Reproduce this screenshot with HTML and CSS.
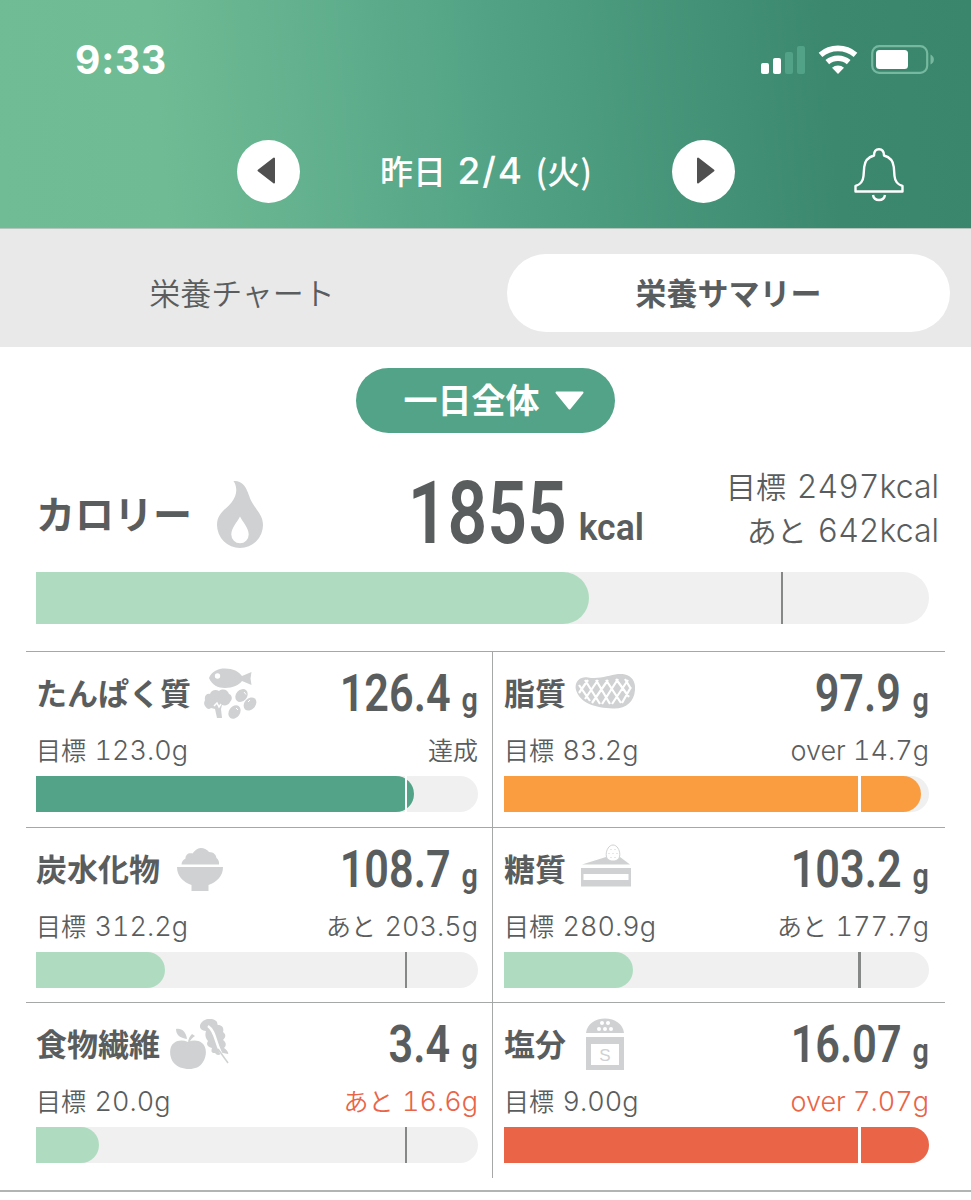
FILE: index.html
```html
<!DOCTYPE html>
<html lang="ja">
<head>
  <meta charset="UTF-8">
  <meta name="viewport" content="width=device-width, initial-scale=1">
  <title>栄養サマリー</title>
  <link rel="stylesheet" href="styles.css">
</head>
<body>
  <header>
    <div class="status">
      <span class="clock">9:33</span>
      <svg class="status-icons" width="174" height="30" viewBox="0 0 174 30" fill="#fff">
        <rect x="0" y="18" width="8" height="11" rx="2"/>
        <rect x="12" y="13" width="8" height="16" rx="2"/>
        <g fill="#52a287">
          <rect x="24" y="7" width="8" height="22" rx="2"/>
          <rect x="36" y="1" width="8" height="28" rx="2"/>
        </g>
        <g fill="none" stroke="#fff" stroke-width="5.600">
          <path d="M59.500 9.800a27 27 0 0 1 35 0"/>
          <path d="M66.300 17.200a16.500 16.500 0 0 1 21.400 0"/>
        </g>
        <path d="M77 29l-6-6.200a9 9 0 0 1 12 0z"/>
        <rect x="111.200" y="1.200" width="55" height="26.600" rx="7" fill="none" stroke="#77b8a0" stroke-width="2.200"/>
        <rect x="115" y="5" width="32" height="19" rx="3.500"/>
        <path d="M169.500 9.500c4.500 2 4.500 8 0 10z" fill="#77b8a0"/>
      </svg>
    </div>
    <div class="nav">
      <button class="circle" aria-label="前の日">
        <svg width="18" height="27" viewBox="0 0 18 27"><path d="M17 1.500v24L1.500 13.500z" fill="#505050" stroke="#505050" stroke-width="2" stroke-linejoin="round"/></svg>
      </button>
      <div class="date">昨日 <span>2/4</span> (火)</div>
      <button class="circle next" aria-label="次の日">
        <svg width="18" height="27" viewBox="0 0 18 27"><path d="M1 1.500v24l15.500-12z" fill="#505050" stroke="#505050" stroke-width="2" stroke-linejoin="round"/></svg>
      </button>
      <svg class="bell" width="50" height="54" viewBox="0 0 50 54" fill="none" stroke="#fff" stroke-width="2.400" stroke-linejoin="round">
        <path d="M1.500 43.500v-5.500c5-1.500 7.500-4 8-10l.7-9c.6-6 4.500-10 9.800-11.500 0-4 1.700-6.300 5-6.300s5 2.300 5 6.300c5.300 1.500 9.200 5.500 9.800 11.500l.7 9c.5 6 3 8.500 8 10v5.500z"/>
        <path d="M19 47c.5 3 2.700 5 6 5s5.500-2 6-5"/>
      </svg>
    </div>
  </header>

  <div class="tabs">
    <div class="tab">栄養チャート</div>
    <div class="tab active">栄養サマリー</div>
  </div>

  <main>
    <div class="period"><span>一日全体</span><svg width="29" height="19" viewBox="0 0 29 19"><path d="M1.500 1.500h26L14.500 17.500z" fill="#fff" stroke="#fff" stroke-width="2" stroke-linejoin="round"/></svg></div>

    <section class="calorie">
      <div class="head">
        <h2>カロリー</h2>
        <svg class="flame" width="46" height="67" viewBox="0 0 46 67">
          <path d="M16.500 0C28 0 29.500 8 34 19.500c4 8.500 12 14 12 24.500a23 23 0 0 1-46 0c0-12 9-15.500 14.500-22.500C20.500 14 20.500 6 16.500 0z" fill="#cfd1d2"/>
          <path d="M23 35.500c3 6 8.700 11.500 8.700 18a8.700 8.700 0 0 1-17.400 0c0-6.500 5.700-12 8.700-18z" fill="#fff"/>
        </svg>
        <div class="amount"><b>1855</b><i>kcal</i></div>
        <div class="goal">
          <div>目標 <span>2497kcal</span></div>
          <div>あと <span>642kcal</span></div>
        </div>
      </div>
      <div class="bar"><div class="fill" style="width:61.900%"></div></div>
    </section>

    <section class="nutrients">
      <div class="cell">
        <div class="head">
          <h3>たんぱく質</h3>
          <svg class="i-protein" width="54" height="52" viewBox="0 0 54 52" fill="#cfd1d2">
            <path d="M5 10C8 3 14 .5 21 .5c8 0 14 3 17 7.500l9.500-4-1 6.500 1 6.500-9.500-4c-3 4-9 7-17 7C14 20 8 17 5 10z"/>
            <circle cx="13.500" cy="8" r="2.700" fill="#fff"/>
            <path d="M1 38c-2-3 0-5 0-6-1-4 2-7 5-6 1-4 6-5 9-3 4-3 9-1 10 3 3 1 4 5 1 8-1 3-5 4-8 3l-1 4 1 9h-5l-2-9-4-1c-2 2-4 1-6-2z"/>
            <path d="M10 38l3-3 2 4 2-3" fill="none" stroke="#fff" stroke-width="1.500"/>
            <ellipse cx="37.500" cy="27.500" rx="7" ry="5.500" transform="rotate(-48 37.500 27.500)"/>
            <ellipse cx="46" cy="36" rx="7.300" ry="5.500" transform="rotate(-48 46 36)"/>
            <ellipse cx="30.500" cy="44" rx="7.300" ry="5.500" transform="rotate(-55 30.500 44)"/>
            <path d="M40 24l2 2.500M46 32l-2 2M32 40l2 2" stroke="#fff"/>
          </svg>
          <div class="amount"><b>126.4</b><i>g</i></div>
        </div>
        <div class="goal"><div>目標 <span>123.0g</span></div><div>達成</div></div>
        <div class="bar done"><div class="fill" style="width:85.500%"></div></div>
      </div>

      <div class="cell">
        <div class="head">
          <h3>脂質</h3>
          <svg class="i-fat" width="60" height="35" viewBox="0 0 60 35">
            <path d="M13 3.500C25 5.500 34 1 43 0c11-1 18 5 17 16-1 12-9 19-22 18.500C20 34 5 29 1 16 -1 8 5 2 13 3.500z" fill="#cfd1d2"/>
            <path d="M4 11l11 16M10 6l15 24M21 6l14 24M31 6l15 23M41 5l13 18M50 5l6 10M4 19L13 6M10 25L23 6M17 29L33 6M27 30L43 5M37 30L53 6M47 29L56 13" fill="none" stroke="#fff" stroke-width="2.200"/>
          </svg>
          <div class="amount"><b>97.9</b><i>g</i></div>
        </div>
        <div class="goal"><div>目標 <span>83.2g</span></div><div><span>over 14.7g</span></div></div>
        <div class="bar over"><div class="fill" style="width:98.100%"></div></div>
      </div>

      <div class="cell">
        <div class="head">
          <h3>炭水化物</h3>
          <svg class="i-carb" width="46" height="43" viewBox="0 0 46 43" fill="#cfd1d2">
            <path d="M4.500 16.500c0-3 2-5 4-6 0-4 3-6 7-5 2-3 5-5.500 8-5.500 4 0 7 2 8.500 4 5 0 7 3 7.500 6 2 1.500 3 4 2.500 6.500z"/>
            <path d="M0 19h46c0 9-6 15-14.500 18v6h-17v-6C6 34 0 28 0 19z"/>
          </svg>
          <div class="amount"><b>108.7</b><i>g</i></div>
        </div>
        <div class="goal"><div>目標 <span>312.2g</span></div><div>あと <span>203.5g</span></div></div>
        <div class="bar"><div class="fill" style="width:29.200%"></div></div>
      </div>

      <div class="cell">
        <div class="head">
          <h3>糖質</h3>
          <svg class="i-sugar" width="50" height="43" viewBox="0 0 50 43">
            <path d="M1 20.500L25 13h14l10 7.500z" fill="#cfd1d2"/>
            <path d="M32 1c4 0 6.800 5 6.800 9.500S36 17 32 17s-6.800-2-6.800-6.500S28 1 32 1z" fill="#fff" stroke="#cfd1d2"/>
            <path d="M30 5v1M34 5v1M28 9v1M32 9v1M36 9v1M30 13v1M34 13v1" stroke="#cfd1d2"/>
            <path d="M0 24h50v18.500H0z" fill="#cfd1d2"/>
            <path d="M2.500 30h45v6h-45z" fill="#fff"/>
          </svg>
          <div class="amount"><b>103.2</b><i>g</i></div>
        </div>
        <div class="goal"><div>目標 <span>280.9g</span></div><div>あと <span>177.7g</span></div></div>
        <div class="bar"><div class="fill" style="width:30.400%"></div></div>
      </div>

      <div class="cell">
        <div class="head">
          <h3>食物繊維</h3>
          <svg class="i-fiber" width="59" height="51" viewBox="0 0 59 51" fill="#cfd1d2">
            <path d="M18 23c5-2 10-2 14 1 5 4 5 13 1 19-3 5-8 7-14 7S7 48 3 43C-1 37-1 27 4 24c4-3 9-3 14-1z"/>
            <path d="M17 20C10 19 6 16 6 10c6-1 10 3 11 10z"/>
            <path d="M18 24c0-4 2-7 4-9l3 2c-3 2-5 4-5.500 7z"/>
            <path d="M36 12c-6 0-8-5-4-9 4-4 11-4 14-1 2 1 1 4 2 4 5 0 6 4 5 7 4 3 2 6 0 8 4 3 3 6 1 8 3 2 5 5 4 6l-5-1c-3 2-6 3-8 0-4 0-4-2-3-5-5-1-6-4-4-7-3-3-3-7-2-10z"/>
            <path d="M38 7c9 6 7 22 17 33" fill="none" stroke="#fff" stroke-width="2.500"/>
            <path d="M48 30l10 14" fill="none" stroke="#cfd1d2" stroke-width="1.500"/>
          </svg>
          <div class="amount"><b>3.4</b><i>g</i></div>
        </div>
        <div class="goal"><div>目標 <span>20.0g</span></div><div class="alert">あと <span>16.6g</span></div></div>
        <div class="bar"><div class="fill" style="width:14.300%"></div></div>
      </div>

      <div class="cell">
        <div class="head">
          <h3>塩分</h3>
          <svg class="i-salt" width="38" height="52" viewBox="0 0 38 52" fill="#cfd1d2">
            <path d="M0 15C1 6 9 .5 19 .5S37 6 38 15z"/>
            <g fill="#fff">
              <circle cx="16" cy="5" r="2"/><circle cx="22" cy="5" r="2"/>
              <circle cx="13" cy="11" r="2"/><circle cx="19" cy="11" r="2"/><circle cx="25" cy="11" r="2"/>
            </g>
            <path d="M0 19h38v33H0z"/>
            <path d="M5 26h28v21H5z" fill="#fff"/>
            <text x="19" y="43" text-anchor="middle">S</text>
          </svg>
          <div class="amount"><b>16.07</b><i>g</i></div>
        </div>
        <div class="goal"><div>目標 <span>9.00g</span></div><div class="alert"><span>over 7.07g</span></div></div>
        <div class="bar danger"><div class="fill" style="width:100%"></div></div>
      </div>
    </section>
  </main>
</body>
</html>
```
FILE: styles.css
```css
* { box-sizing: border-box; }
body {
  margin: 0;
  height: 1200px;
  overflow: hidden;
  background: #fff;
  color: #5a5d5e;
  font-family: "Noto Sans CJK JP", sans-serif;
}
h2, h3 { margin: 0; font-weight: 700; white-space: nowrap; }
svg { display: block; flex: none; }

/* header */
header {
  height: 229px;
  background: linear-gradient(85deg, #70bd95 0%, #6fbb94 17%, #52a386 51%, #3b886e 85%, #3a866c 100%);
  border-bottom: 1px solid #b5c4bd;
  color: #fff;
}
.status {
  height: 120px;
  display: flex; align-items: center; justify-content: space-between;
  padding: 0 36px 0 75px;
}
.clock { font: 700 39px/40px Inter, sans-serif; letter-spacing: 0.8px; padding-bottom: 1px; }
.nav { display: flex; align-items: center; padding-left: 237px; height: 102px; }
.circle {
  width: 63px; height: 63px; padding: 0 6px 2px 0;
  border: none; border-radius: 50%; background: #fff;
  display: flex; align-items: center; justify-content: center;
}
.circle.next { padding: 0 0 2px 5px; }
.date {
  width: 372px; padding-bottom: 3px;
  text-align: center; font-size: 33px; font-weight: 500; line-height: 40px;
  white-space: nowrap; word-spacing: 4px;
}
.date span { font: 500 37px/1 Inter, sans-serif; letter-spacing: 2px; }
.bell { margin: 8px 0 0 119px; }

/* tabs */
.tabs {
  height: 118px;
  display: grid; grid-template-columns: 486px 443px; column-gap: 21px;
  align-items: center;
  background: #e9e9e9;
  padding-top: 9px;
}
.tab {
  height: 78px; line-height: 75px;
  text-align: center; font-size: 31px; font-weight: 350;
}
.tab:first-child { padding-right: 2px; }
.active { background: #fff; border-radius: 39px; font-weight: 700; }

.period {
  width: 259px; height: 65px;
  margin: 21px auto 0 356px;
  display: flex; align-items: center; justify-content: center; gap: 15px;
  padding-left: 16px;
  background: #52a387; border-radius: 33px;
  color: #fff; font-size: 34px; font-weight: 600;
}
.period span { line-height: 62px; height: 65px; }

/* shared pieces */
.head { display: flex; align-items: center; }
.amount {
  margin-left: auto;
  display: flex; align-items: baseline;
  font-family: Roboto, sans-serif; white-space: nowrap;
}
.amount b, .amount i {
  font-style: normal; font-weight: 600;
  transform: scaleX(0.83); transform-origin: right;
}
.amount i { transform: scaleX(0.87); }
.goal { font-weight: 350; white-space: nowrap; word-spacing: 3px; }
.goal span {
  font-family: Inter, sans-serif; font-weight: 300; line-height: 1;
  font-variant-numeric: tabular-nums;
  word-spacing: 0;
}
.bar {
  position: relative;
  height: 36px;
  background: #f0f0f0; border-radius: 0 18px 18px 0;
}
.fill { height: 100%; background: #afdcc0; border-radius: 0 18px 18px 0; }
.bar::after {
  content: "";
  position: absolute; top: 0; bottom: 0; left: 83.4%;
  width: 2.500px; background: #868888;
}
.done .fill { background: #52a387; }
.over .fill { background: #f99d40; }
.danger .fill { background: #ea6448; }
.done::after, .over::after, .danger::after { background: #fff; }
.alert { color: #ea6448; }

/* calories */
.calorie { padding: 24px 32px 0 36px; height: 218px; }
.calorie .head { height: 115px; }
.calorie h2 { font-size: 39px; font-weight: 600; padding-bottom: 5px; }
.flame { margin: 0 0 1px 25px; }
.calorie .amount { margin-left: 103px; width: 278px; justify-content: flex-end; padding-bottom: 4px; }
.calorie .amount b { font-size: 87px; line-height: 100px; transform: scaleX(0.8); }
.calorie .amount i { font-size: 37px; margin-left: 9px; transform: translateY(-3px) scaleX(0.96); }
.calorie .goal {
  margin-left: auto; padding-bottom: 15px;
  font-size: 30px; line-height: 44px; text-align: right;
  word-spacing: 4px;
}
.calorie .goal div { height: 44px; }
.calorie .goal span { font-size: 32px; }
.calorie .bar { width: 893px; height: 52px; border-radius: 0 26px 26px 0; }
.calorie .fill { border-radius: 0 26px 26px 0; }

/* nutrient grid */
.nutrients {
  display: grid; grid-template-columns: 467px 452px;
  margin-left: 26px;
}
.nutrients::after {
  content: "";
  grid-column: 1 / -1;
  margin: 12px 0 0 -26px;
  width: 971px; height: 2px; background: #b2b4b4;
}
.cell { height: 175.700px; padding: 0 16px 0 11px; border-top: 1.500px solid #a6a8a8; }
.cell:nth-child(odd) { border-right: 1.500px solid #a6a8a8; padding: 0 14px 0 10px; }
.cell .head { height: 83px; }
.cell h3 { font-size: 31px; font-weight: 600; padding-bottom: 4px; }
.cell .amount b { font-size: 52px; }
.cell .amount i { font-size: 33px; margin-left: 9px; }
.cell .goal {
  display: flex; justify-content: space-between;
  height: 41px; font-size: 25px; line-height: 28px;
}
.cell .goal span { font-size: 27px; }
.i-protein { margin-left: 13px; }
.i-fat { margin: 0 0 4px 9px; }
.i-carb { margin-left: 17px; }
.i-sugar { margin: 0 0 8px 15px; }
.i-fiber { margin-left: 10px; }
.i-salt { margin: 0 0 1px 20px; }
.i-salt text { font: 17px "Liberation Sans", sans-serif; }
```
